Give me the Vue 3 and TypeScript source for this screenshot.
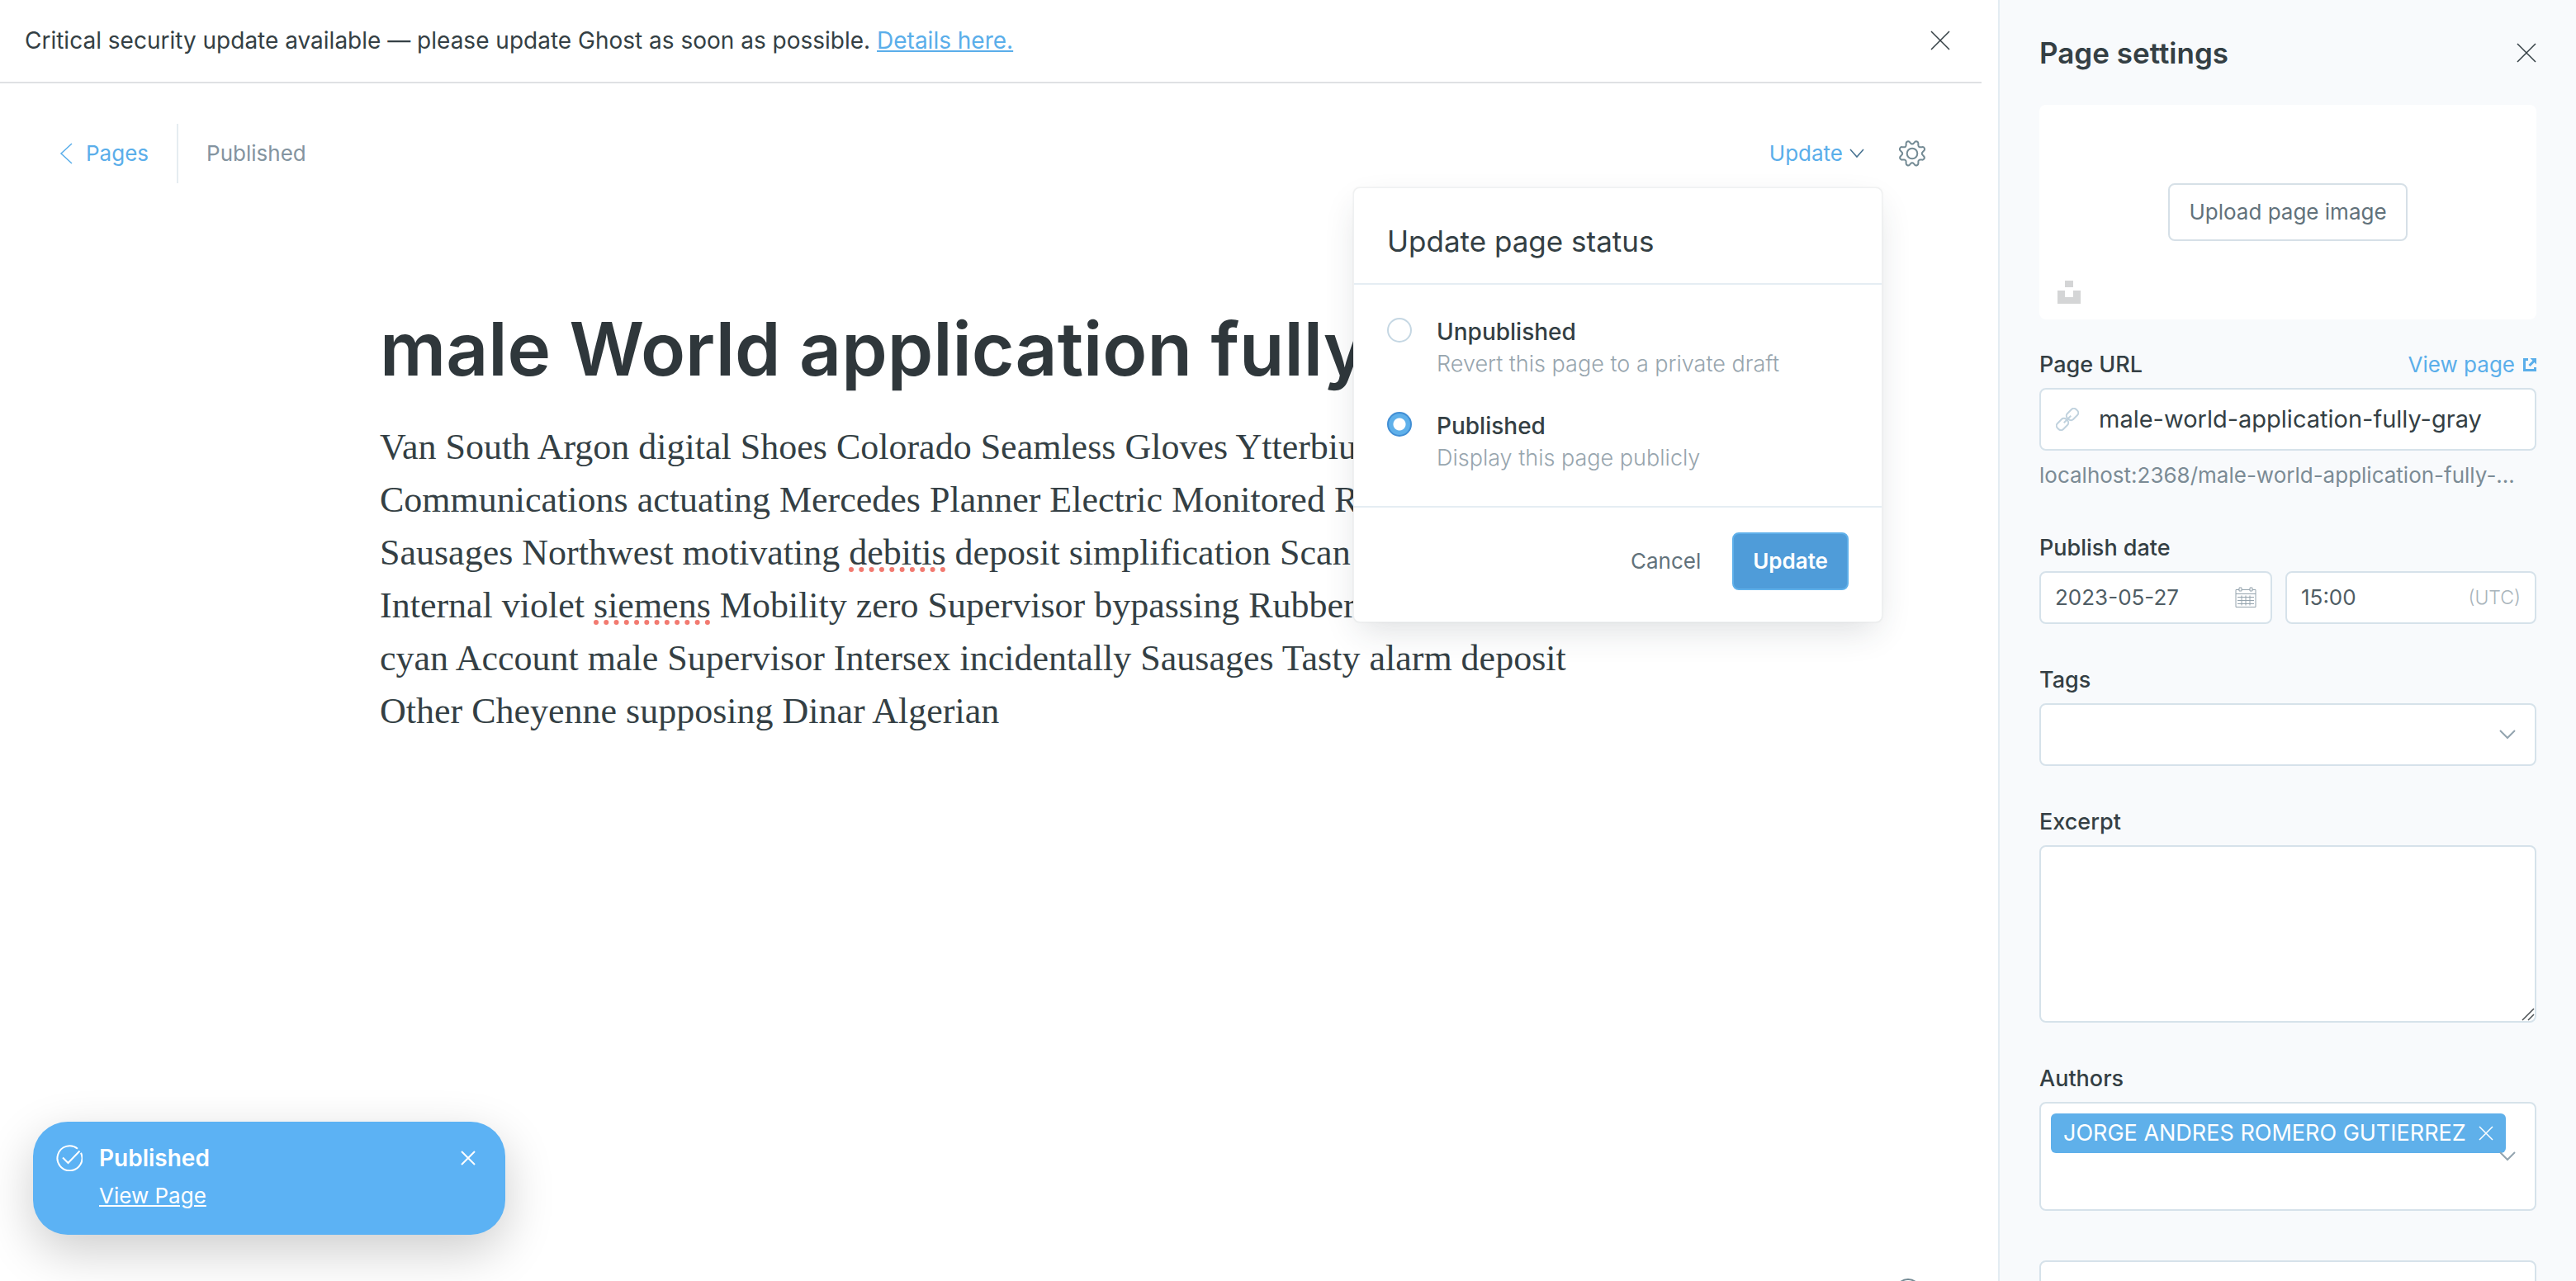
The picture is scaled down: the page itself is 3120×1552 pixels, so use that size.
<script setup lang="ts">
import { ref } from 'vue'

interface StatusOption {
  value: string
  title: string
  hint: string
}

const statusOptions: StatusOption[] = [
  { value: 'draft', title: 'Unpublished', hint: 'Revert this page to a private draft' },
  { value: 'published', title: 'Published', hint: 'Display this page publicly' },
]

const status = ref('published')
const slug = ref('male-world-application-fully-gray')
const publishDate = ref('2023-05-27')
const publishTime = ref('15:00')
const tags = ref('')
const excerpt = ref('')
const authorSearch = ref('')
const template = ref('')
</script>

<template>
  <div class="app">
    <main class="editor">
      <div class="banner">
        <p class="banner-text">
          Critical security update available — please update Ghost as soon as possible.
          <a href="#details">Details here.</a>
        </p>
        <button class="icon-button" type="button" aria-label="Dismiss">
          <svg class="icon-24" viewBox="0 0 24 24"><path d="M1 1 23 23M23 1 1 23" /></svg>
        </button>
      </div>

      <header class="toolbar">
        <a class="back" href="#pages">
          <svg width="16" height="26" viewBox="0 0 16 26"><path d="M15 1 2 13 15 25" /></svg>
          Pages
        </a>
        <span class="state">Published</span>
        <div class="actions">
          <button class="update-trigger" type="button">
            Update
            <svg width="18" height="12" viewBox="0 0 18 12"><path d="M1 1 9 10 17 1" /></svg>
          </button>
          <button class="icon-button gear" type="button" aria-label="Settings">
            <svg width="32" height="32" viewBox="0 0 32 32">
              <circle cx="16" cy="16" r="6.3" />
              <path d="M12.900 2.100a2.500 2.500 0 0 0-4.300 1.800v2a2.300 2.300 0 0 1-2.500 2.400l-2-.1a2.500 2.500 0 0 0-2.300 4.300l1.400 1.600a2.300 2.300 0 0 1 0 3.800L1.800 19.500a2.500 2.500 0 0 0 2.300 4.100l2-.1a2.300 2.300 0 0 1 2.500 2.400v2a2.500 2.500 0 0 0 4.300 1.800l1.300-1.500a2.300 2.300 0 0 1 3.600 0l1.300 1.500a2.500 2.500 0 0 0 4.300-1.800v-2a2.300 2.300 0 0 1 2.500-2.400l2 .1a2.500 2.500 0 0 0 2.300-4.100l-1.400-1.600a2.300 2.300 0 0 1 0-3.800l1.400-1.600a2.500 2.500 0 0 0-2.300-4.300l-2 .1a2.300 2.300 0 0 1-2.500-2.400v-2a2.500 2.500 0 0 0-4.300-1.800l-1.300 1.500a2.300 2.300 0 0 1-3.600 0z" />
            </svg>
          </button>
        </div>
      </header>

      <section class="status-menu" aria-label="Update page status">
        <h2>Update page status</h2>
        <div class="options">
          <label v-for="option in statusOptions" :key="option.value" class="option">
            <input v-model="status" type="radio" name="status" :value="option.value" />
            <span class="option-text">
              <strong>{{ option.title }}</strong>
              <small>{{ option.hint }}</small>
            </span>
          </label>
        </div>
        <footer>
          <button class="cancel" type="button">Cancel</button>
          <button class="confirm" type="button">Update</button>
        </footer>
      </section>

      <article class="content">
        <h1>male World application fully</h1>
        <p>
          <span class="line">Van South Argon digital Shoes Colorado Seamless Gloves Ytterbium</span>
          <span class="line">Communications actuating Mercedes Planner Electric Monitored R</span>
          <span class="line">Sausages Northwest motivating <span class="typo">debitis</span> deposit simplification Scan</span>
          <span class="line">Internal violet <span class="typo">siemens</span> Mobility zero Supervisor bypassing Rubber</span>
          <span class="line">cyan Account male Supervisor Intersex incidentally Sausages Tasty alarm deposit</span>
          <span class="line">Other Cheyenne supposing Dinar Algerian</span>
        </p>
      </article>

      <aside class="toast" role="status">
        <svg width="32" height="32" viewBox="0 0 32 32">
          <path d="M26 4.700A15 15 0 1 0 30 9.800" />
          <path d="M8 15.500 14.500 22 28.500 7.500" />
        </svg>
        <div class="toast-text">
          <strong>Published</strong>
          <a href="#view">View Page</a>
        </div>
        <button class="icon-button" type="button" aria-label="Close notification">
          <svg width="18" height="18" viewBox="0 0 18 18"><path d="M1 1 17 17M17 1 1 17" /></svg>
        </button>
      </aside>

      <button class="icon-button help" type="button" aria-label="Help">
        <svg width="32" height="32" viewBox="0 0 32 32"><circle cx="16" cy="16" r="15" /></svg>
      </button>
    </main>

    <aside class="settings">
      <header class="settings-head">
        <h2>Page settings</h2>
        <button class="icon-button" type="button" aria-label="Close settings">
          <svg class="icon-24" viewBox="0 0 24 24"><path d="M1 1 23 23M23 1 1 23" /></svg>
        </button>
      </header>

      <div class="uploader">
        <button class="upload" type="button">Upload page image</button>
        <svg class="unsplash" width="28" height="28" viewBox="0 0 28 28">
          <path d="M9 0h10v8H9zM0 12h9v8h10v-8h9v16H0z" />
        </svg>
      </div>

      <div class="field first">
        <div class="label-row">
          <label for="slug">Page URL</label>
          <a href="#view-page">
            View page
            <svg class="external" width="16" height="16" viewBox="0 0 16 16">
              <path d="M6 1.500H1.500v13h13V11" />
              <path d="M7.500 9 13 3.500" />
              <path class="head" d="M8.500 0H16v7.500z" />
            </svg>
          </a>
        </div>
        <div class="control slug">
          <svg width="28" height="28" viewBox="0 0 28 28">
            <g transform="rotate(-45 14 14)">
              <rect x="-2" y="9" width="15" height="10" rx="4" />
              <rect x="15" y="9" width="15" height="10" rx="4" />
              <path d="M8 14h12" />
            </g>
          </svg>
          <input id="slug" v-model="slug" type="text" />
        </div>
        <p class="preview">localhost:2368/male-world-application-fully-...</p>
      </div>

      <div class="field">
        <label for="date">Publish date</label>
        <div class="date-row">
          <div class="control date">
            <input id="date" v-model="publishDate" type="text" />
            <svg width="26" height="26" viewBox="0 0 26 26">
              <path d="M1 3.500h24v21H1zM1 8.500h24M3 12.500h20M3 16.500h20M3 20.500h20M8 10.500v12M13 10.500v12M18 10.500v12" />
              <path class="ring" d="M5 1h3v4H5zM18 1h3v4h-3z" />
            </svg>
          </div>
          <div class="control time">
            <input v-model="publishTime" type="text" aria-label="Publish time" />
            <span class="zone">(UTC)</span>
          </div>
        </div>
      </div>

      <div class="field">
        <label for="tags">Tags</label>
        <div class="control picker">
          <input id="tags" v-model="tags" type="text" />
          <svg width="20" height="12" viewBox="0 0 20 12"><path d="M1 1 10 10 19 1" /></svg>
        </div>
      </div>

      <div class="field">
        <label for="excerpt">Excerpt</label>
        <div class="excerpt">
          <textarea id="excerpt" v-model="excerpt" class="control"></textarea>
          <svg class="grip" width="16" height="16" viewBox="0 0 16 16"><path d="M1 15 15 1M8 15 15 8" /></svg>
        </div>
      </div>

      <div class="field">
        <label for="authors">Authors</label>
        <div class="control picker authors">
          <div class="chosen">
            <span class="chip">
              JORGE ANDRES ROMERO GUTIERREZ
              <button class="icon-button" type="button" aria-label="Remove author">
                <svg width="18" height="18" viewBox="0 0 18 18"><path d="M1 1 17 17M17 1 1 17" /></svg>
              </button>
            </span>
            <input id="authors" v-model="authorSearch" type="text" />
          </div>
          <svg width="20" height="12" viewBox="0 0 20 12"><path d="M1 1 10 10 19 1" /></svg>
        </div>
      </div>

      <div class="field last">
        <input v-model="template" class="control" type="text" aria-label="Template" />
      </div>
    </aside>
  </div>
</template>

<style>
html,
body {
  overflow: hidden;
}
</style>

<style scoped>
.app,
.app * {
  box-sizing: border-box;
}

.app {
  display: flex;
  height: 100vh;
  overflow: hidden;
  background: #fff;
  color: #343f44;
  font: 400 26px/36px Inter, "Liberation Sans", sans-serif;
}

h1,
h2,
p {
  margin: 0;
}

button,
input,
textarea {
  margin: 0;
  padding: 0;
  border: 0;
  background: none;
  color: inherit;
  font: inherit;
}

a {
  color: #5aaeea;
}

svg {
  display: block;
  flex: none;
  fill: none;
  stroke: currentColor;
  stroke-width: 2;
}

.icon-24 {
  width: 24px;
  height: 24px;
}

.icon-button {
  display: block;
  flex: none;
}

.editor {
  position: relative;
  flex: 1;
  min-width: 0;
}

.banner {
  display: flex;
  align-items: center;
  justify-content: space-between;
  height: 101px;
  margin-right: 20px;
  padding: 0 38px 2px 30px;
  border-bottom: 2px solid #dfe1e3;
  font-size: 28px;
}

.toolbar {
  display: flex;
  align-items: center;
  height: 72px;
  margin: 49px 88px 0 72px;
}

.back {
  display: flex;
  align-items: center;
  gap: 16px;
  height: 100%;
  padding-right: 34px;
  border-right: 2px solid #e5ecf1;
  text-decoration: none;
}

.back svg,
.update-trigger svg {
  stroke-width: 1.5;
}

.state {
  padding-left: 34px;
  color: #8494a0;
}

.actions {
  display: flex;
  align-items: center;
  gap: 42px;
  margin-left: auto;
}

.update-trigger {
  display: flex;
  align-items: center;
  gap: 8px;
  color: #5aaeea;
}

.update-trigger svg {
  color: #44708f;
}

.gear {
  color: #738a94;
}

.status-menu {
  position: absolute;
  z-index: 2;
  top: 227px;
  right: 140px;
  width: 641px;
  border: 1px solid #eff1f2;
  border-radius: 8px;
  background: #fff;
  box-shadow: 0 16px 40px -8px rgba(40, 50, 60, 0.16), 0 0 2px rgba(0, 0, 0, 0.1);
}

.status-menu h2 {
  padding: 46px 40px 33px;
  border-bottom: 2px solid #e5edf3;
  font-size: 35px;
  font-weight: 400;
  line-height: 36px;
}

.options {
  display: flex;
  flex-direction: column;
  gap: 36px;
  padding: 38px 40px;
}

.option {
  display: flex;
  align-items: flex-start;
  gap: 30px;
}

.option input {
  width: 30px;
  height: 30px;
  margin-top: 2px;
  border: 2px solid #c5d7e3;
  border-radius: 50%;
  appearance: none;
}

.option input:checked {
  border: 2px solid #418ed4;
  background: radial-gradient(circle, #fff 7px, #5fb0ea 8px);
}

.option-text {
  display: flex;
  flex-direction: column;
}

.option strong {
  font-size: 28px;
  font-weight: 500;
  line-height: 38px;
}

.option small {
  color: #97a5ae;
  font-size: 27px;
  font-weight: 300;
  line-height: 40px;
}

.status-menu footer {
  display: flex;
  align-items: center;
  justify-content: flex-end;
  gap: 38px;
  padding: 30px 40px 38px;
  border-top: 2px solid #e5edf3;
}

.cancel {
  color: #62727b;
}

.confirm {
  height: 70px;
  padding: 0 23px;
  border: 2px solid #5fb0ea;
  border-radius: 8px;
  background: #4f9cd9;
  color: #fff;
  font-weight: 600;
}

.content {
  margin: 0 460px;
  padding-top: 143px;
}

.content h1 {
  color: #2f373b;
  font-size: 89px;
  font-weight: 600;
  line-height: 116px;
  white-space: nowrap;
}

.content p {
  margin-top: 29px;
  font: 400 44px/64px "Liberation Serif", serif;
}

.line {
  display: block;
  white-space: nowrap;
}

.typo {
  text-decoration: underline dotted #f27a70 6px;
  text-decoration-skip-ink: none;
  text-underline-offset: 3px;
}

.toast {
  position: absolute;
  bottom: 56px;
  left: 40px;
  display: flex;
  align-items: flex-start;
  width: 572px;
  height: 137px;
  padding: 28px 36px 0 28px;
  border-radius: 42px;
  background: #5cb2f4;
  box-shadow: 0 20px 60px rgba(0, 0, 0, 0.2);
  color: #fff;
}

.toast-text {
  display: flex;
  flex: 1;
  flex-direction: column;
  align-items: flex-start;
  gap: 14px;
  margin-left: 20px;
  line-height: 32px;
}

.toast strong {
  font-size: 28px;
  font-weight: 600;
}

.toast a {
  color: #fff;
}

.toast .icon-button {
  margin-top: 7px;
}

.help {
  position: absolute;
  right: 93px;
  bottom: -29px;
  color: #738a94;
}

.settings {
  flex: none;
  width: 700px;
  padding: 0 48px;
  overflow: hidden;
  border-left: 2px solid #e4ecf2;
  background: #f8fafc;
}

.settings-head {
  display: flex;
  align-items: center;
  justify-content: space-between;
  height: 127px;
}

.settings-head h2 {
  font-size: 35px;
  font-weight: 600;
}

.settings-head svg,
.banner svg {
  stroke-width: 1.5;
}

.uploader {
  position: relative;
  display: flex;
  align-items: center;
  justify-content: center;
  height: 260px;
  border-radius: 8px;
  background: #fff;
}

.upload {
  height: 70px;
  padding: 0 23px;
  border: 2px solid #d6e0e7;
  border-radius: 8px;
  color: #62727b;
}

.unsplash {
  position: absolute;
  bottom: 19px;
  left: 22px;
  fill: #d4d5d6;
  stroke: none;
}

.field {
  display: flex;
  flex-direction: column;
  gap: 10px;
  margin-top: 50px;
}

.field.first {
  margin-top: 37px;
}

.field.last {
  margin-top: 60px;
}

.field label {
  font-size: 27px;
  font-weight: 500;
}

.label-row {
  display: flex;
  justify-content: space-between;
}

.label-row a {
  display: flex;
  align-items: center;
  gap: 10px;
  text-decoration: none;
}

.external {
  stroke-width: 3;
}

.external .head {
  fill: currentColor;
  stroke: none;
}

.control {
  display: flex;
  align-items: center;
  width: 100%;
  height: 76px;
  border: 2px solid #d6e2ea;
  border-radius: 8px;
  background: #fff;
}

.control input {
  flex: 1;
  width: 0;
  min-width: 0;
}

.slug {
  gap: 24px;
  padding: 0 18px;
  font-size: 29px;
}

.slug svg {
  color: #c0d2de;
}

.preview {
  color: #7b8b95;
  line-height: 40px;
  white-space: nowrap;
}

.date-row {
  display: flex;
  gap: 16px;
}

.date-row .control {
  height: 64px;
  padding: 0 17px;
  color: #4f5d65;
}

.control.date {
  width: 282px;
}

.control.time {
  flex: 1;
}

.date svg {
  color: #94a3ad;
  stroke-width: 1;
}

.zone {
  color: #a9b4bb;
  font-size: 23px;
  font-weight: 300;
}

.ring {
  fill: #fff;
}

.picker {
  padding: 0 23px 0 12px;
}

.picker > svg {
  color: #93a4af;
}

.excerpt {
  position: relative;
}

textarea.control {
  display: block;
  height: 215px;
  resize: none;
}

.grip {
  position: absolute;
  right: 2px;
  bottom: 2px;
  color: #4a4f53;
  stroke-width: 1.5;
}

.picker.authors {
  height: 132px;
}

.chosen {
  display: flex;
  flex: 1;
  flex-direction: column;
  align-items: flex-start;
  gap: 8px;
  min-width: 0;
}

.chip {
  display: flex;
  align-items: center;
  gap: 15px;
  height: 48px;
  padding: 0 15px;
  border-radius: 6px;
  background: #5fb0ea;
  color: #fff;
  font-size: 27px;
  white-space: nowrap;
}

.chip svg {
  stroke-width: 1.5;
}

.chosen input {
  flex: none;
  width: 100%;
  height: 48px;
}
</style>
